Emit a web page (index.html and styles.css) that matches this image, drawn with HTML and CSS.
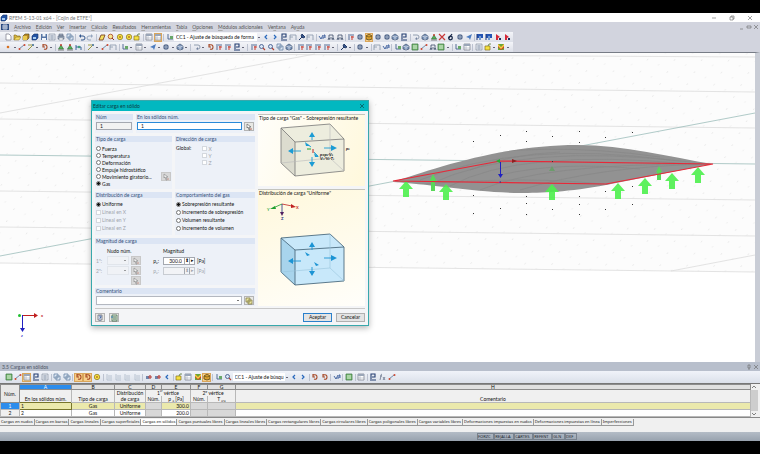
FILE: index.html
```html
<!DOCTYPE html>
<html lang="es">
<head>
  <meta charset="UTF-8">
  <title>RFEM 5-13-01 x64 - [Cojin de ETFE*]</title>
  <link rel="stylesheet" href="styles.css">
</head>
<body>

<!-- iconos -->
<svg class="defs" aria-hidden="true">
  <defs>
    <symbol id="i-doc" viewBox="0 0 8 8"><path d="M2 1h3l2 2v4H2z" fill="#fff" stroke="#667" stroke-width=".6"/></symbol>
    <symbol id="i-folder" viewBox="0 0 8 8"><path d="M1 7V2h2l1 1h3v1" fill="#d8b640" stroke="#806618" stroke-width=".6"/><path d="M1 7l2-3h5L6 7z" fill="#f4dc62" stroke="#806618" stroke-width=".5"/></symbol>
    <symbol id="i-cubey" viewBox="0 0 8 8"><path d="M1 3l2-2h4v4L5 7H1z" fill="#b98c28" stroke="#4d3c14" stroke-width=".6"/><path d="M1 3h4v4H1z" fill="#e8c850"/></symbol>
    <symbol id="i-cubeb" viewBox="0 0 8 8"><path d="M1 3l2-2h4v4L5 7H1z" fill="#2454a4" stroke="#183468" stroke-width=".6"/><path d="M2 4h3v2H2z" fill="#a8ccf0"/></symbol>
    <symbol id="i-disk" viewBox="0 0 8 8"><path d="M1 1h6v6H1z" fill="#5574a4"/><path d="M2.500 1h3v2.500h-3zM2 5h4v2H2z" fill="#f2f5fa"/></symbol>
    <symbol id="i-sheet" viewBox="0 0 8 8"><path d="M1 1h6v6H1z" fill="#e4e9f0" stroke="#7c8898" stroke-width=".6"/><path d="M2 3h4M2 5h4M4 2v5" stroke="#8794a8" stroke-width=".6"/></symbol>
    <symbol id="i-print" viewBox="0 0 8 8"><path d="M2 1h4v2H2zM1 3h6v3H1z" fill="#a4b0c0" stroke="#4d5a70" stroke-width=".5"/><path d="M2 5h4v2H2z" fill="#fff" stroke="#4d5a70" stroke-width=".4"/></symbol>
    <symbol id="i-copy" viewBox="0 0 8 8"><path d="M1 1h4v4H1zM3 3h4v4H3z" fill="#dfe9f5" stroke="#57759c" stroke-width=".7"/></symbol>
    <symbol id="i-notes" viewBox="0 0 8 8"><path d="M1 1h4v4H1zM3 3h4v4H3z" fill="#ece6a0" stroke="#77703c" stroke-width=".7"/></symbol>
    <symbol id="i-undo" viewBox="0 0 8 8"><path d="M2 3h3q2 0 2 2T5 7H3" fill="none" stroke="#32568c" stroke-width="1"/><path d="M3 1v4L1 3z" fill="#32568c"/></symbol>
    <symbol id="i-redo" viewBox="0 0 8 8"><path d="M6 3H3Q1 3 1 5t2 2h2" fill="none" stroke="#94a6bf" stroke-width="1"/><path d="M5 1v4l2-2z" fill="#94a6bf"/></symbol>
    <symbol id="i-pen" viewBox="0 0 8 8"><path d="M1 7l2-5h4L5 7z" fill="#f4e060" stroke="#7c4428" stroke-width=".9"/></symbol>
    <symbol id="i-ringr" viewBox="0 0 8 8"><circle cx="3.500" cy="3.500" r="2.300" fill="#f6e890" stroke="#b05030" stroke-width=".9"/><path d="M5 5l2 2" stroke="#903818" stroke-width="1"/></symbol>
    <symbol id="i-ringy" viewBox="0 0 8 8"><circle cx="4" cy="4" r="2.700" fill="#f4e040" stroke="#8a7420" stroke-width=".7"/><path d="M3 4h2" stroke="#a04020" stroke-width="1"/></symbol>
    <symbol id="i-boxy" viewBox="0 0 8 8"><path d="M1 3h5v4H1z" fill="#f4e040" stroke="#8a7420" stroke-width=".7"/><path d="M4 3l1-2h2" fill="none" stroke="#557733" stroke-width=".8"/></symbol>
    <symbol id="i-table" viewBox="0 0 8 8"><path d="M1 1h6v6H1z" fill="#fff" stroke="#727a88" stroke-width=".7"/><path d="M1 1h6v2H1z" fill="#9aa6b8"/><path d="M1 5h6M3 3v4" stroke="#9098a8" stroke-width=".5"/></symbol>
    <symbol id="i-axis" viewBox="0 0 8 8"><path d="M2 1v5h5" fill="none" stroke="#46608c" stroke-width=".9"/><path d="M4 3h3v3H4z" fill="#68a868"/></symbol>
    <symbol id="i-prev" viewBox="0 0 8 8"><path d="M5 2L3 4l2 2" fill="none" stroke="#2868bc" stroke-width="1.200"/></symbol>
    <symbol id="i-next" viewBox="0 0 8 8"><path d="M3 2l2 2-2 2" fill="none" stroke="#2868bc" stroke-width="1.200"/></symbol>
    <symbol id="i-load" viewBox="0 0 8 8"><path d="M1 7h6M2 6V1h4v3H3" fill="none" stroke="#223c70" stroke-width="1.100"/></symbol>
    <symbol id="i-frame" viewBox="0 0 8 8"><path d="M1 7V2h6v5M1 4h3" fill="none" stroke="#8794a8" stroke-width=".8"/></symbol>
    <symbol id="i-brush" viewBox="0 0 8 8"><path d="M1 7l3-3M4 1l3 3-2 1-2-2z" fill="#35548c" stroke="#253c68" stroke-width="1"/></symbol>
    <symbol id="i-beam" viewBox="0 0 8 8"><path d="M1 5h6M1 7l1-2 1 2M5 7l1-2 1 2M2 4V2h4v2" fill="none" stroke="#3c4c68" stroke-width=".8"/></symbol>
    <symbol id="i-xy" viewBox="0 0 8 8"><path d="M1 3l2 3 2-4M4 5h2V2h1v3" fill="none" stroke="#345898" stroke-width=".9"/></symbol>
    <symbol id="i-solid" viewBox="0 0 8 8"><path d="M1 3l3-2 3 2v3L4 7 1 6z" fill="#8098bc" stroke="#3c5070" stroke-width=".7"/><path d="M1 3l3 1 3-1M4 4v3" fill="none" stroke="#fff" stroke-width=".5"/></symbol>
    <symbol id="i-solido" viewBox="0 0 8 8"><path d="M1 3l3-2 3 2v3L4 7 1 6z" fill="#d8a030" stroke="#5c4818" stroke-width=".8"/><path d="M1 3l3 1 3-1" fill="none" stroke="#5c4818" stroke-width=".6"/></symbol>
    <symbol id="i-ball" viewBox="0 0 8 8"><circle cx="4" cy="4" r="2.700" fill="#516488"/><path d="M4 1.500v5M1.500 4h5" stroke="#cbd6e8" stroke-width=".6"/></symbol>
    <symbol id="i-line" viewBox="0 0 8 8"><path d="M1 6l5-4" stroke="#557799" stroke-width=".8"/><circle cx="1.500" cy="6" r="1" fill="#d04830"/><circle cx="6.500" cy="2" r="1" fill="#d04830"/></symbol>
    <symbol id="i-node" viewBox="0 0 8 8"><circle cx="4" cy="4" r="1.300" fill="#d87020"/></symbol>
    <symbol id="i-member" viewBox="0 0 8 8"><path d="M1 7l5-5M1 2h6" stroke="#9c9840" stroke-width="1"/><circle cx="6" cy="2" r="1" fill="#4878b0"/></symbol>
    <symbol id="i-support" viewBox="0 0 8 8"><path d="M4 2l2.500 4h-5z" fill="#58b058" stroke="#2c6c34" stroke-width=".6"/><path d="M1 7h6" stroke="#555" stroke-width=".7"/><circle cx="4" cy="2" r="1" fill="#c04030"/></symbol>
    <symbol id="i-hinge" viewBox="0 0 8 8"><path d="M1 2v5M1 4h5M6 4v3" stroke="#2c5c94" stroke-width=".9"/><circle cx="4" cy="4" r="1.300" fill="#44a080"/></symbol>
    <symbol id="i-red" viewBox="0 0 8 8"><path d="M1 2h6M2 3v4" stroke="#46608c" stroke-width=".9"/><path d="M4 4h3M5 3v4" stroke="#c83c30" stroke-width="1"/></symbol>
    <symbol id="i-cross" viewBox="0 0 8 8"><path d="M1 1l6 6M7 1L1 7" stroke="#c83838" stroke-width="1.200"/></symbol>
    <symbol id="i-six" viewBox="0 0 8 8"><circle cx="3.500" cy="5" r="1.800" fill="none" stroke="#182848" stroke-width="1.300"/><path d="M2 5l3-4" stroke="#182848" stroke-width="1.200"/></symbol>
    <symbol id="i-plane" viewBox="0 0 8 8"><path d="M1 4l6-3-2 6-1-2z" fill="#4c7cc0"/></symbol>
    <symbol id="i-flagb" viewBox="0 0 8 8"><path d="M1 1h6v4H1z" fill="#2454b4"/><path d="M1 1v6" stroke="#1c3878"/><path d="M3 3h2v4H3z" fill="#7098d0"/></symbol>
    <symbol id="i-flagr" viewBox="0 0 8 8"><path d="M2 1l4 3-2 1v2H2z" fill="#d42838"/><path d="M5 5h2v2H5z" fill="#1c2c58"/></symbol>
    <symbol id="i-zoom" viewBox="0 0 8 8"><circle cx="3.500" cy="3.500" r="2" fill="#dbe7f7" stroke="#445c8c" stroke-width=".9"/><path d="M5 5l2 2" stroke="#b04030" stroke-width="1.100"/></symbol>
    <symbol id="i-green" viewBox="0 0 8 8"><path d="M1 1h6v6H1z" fill="#7fbf78" stroke="#38703c" stroke-width=".7"/><path d="M2 3h4M2 5h4" stroke="#fff" stroke-width=".7"/></symbol>
    <symbol id="i-chart" viewBox="0 0 8 8"><path d="M1 1h6v6H1z" fill="#68a838"/><path d="M1 1l3 3 3-3v4L4 7 1 4z" fill="#d03c28"/><path d="M1 1l3 3 3-3v2L4 6 1 3z" fill="#f0d840"/></symbol>
    <symbol id="i-arrow" viewBox="0 0 8 8"><path d="M1 2h4q2 0 2 2T5 6" fill="none" stroke="#8794a8" stroke-width=".9"/><path d="M3 6l2-2v3z" fill="#7484a0"/></symbol>
    <symbol id="i-rot" viewBox="0 0 8 8"><path d="M2 2q4-1 4 2T3 6M2 1v3h2" fill="none" stroke="#a44420" stroke-width="1.100"/></symbol>
    <symbol id="i-del" viewBox="0 0 8 8"><path d="M1 3h3v3H1z" fill="#6c84ac"/><path d="M3 4h4M5 2v4" stroke="#b83c38" stroke-width="1.200"/></symbol>
    <symbol id="i-faint" viewBox="0 0 8 8"><path d="M2 1v6h5M4 2v4M6 2v4" fill="none" stroke="#b4bfce" stroke-width=".9"/></symbol>
    <symbol id="i-fx" viewBox="0 0 8 8"><path d="M4 1Q3 1 3 3L2 7M2 3h2M5 4l2 3M7 4L5 7" fill="none" stroke="#68748c" stroke-width=".8"/></symbol>
    <symbol id="i-pick" viewBox="0 0 8 8"><path d="M2 1l4 3H4l1 3-1 0-1-3-1 1z" fill="#fff" stroke="#555" stroke-width=".6"/><path d="M5 6h2" stroke="#b05040" stroke-width=".8"/></symbol>
    <symbol id="i-help" viewBox="0 0 8 8"><path d="M2 1h4v5H2z" fill="#e9f0fa" stroke="#445" stroke-width=".6"/><path d="M3 2h2v1.500H4V5M4 6v1" fill="none" stroke="#234a90" stroke-width=".7"/></symbol>
    <symbol id="i-calc" viewBox="0 0 8 8"><path d="M2 1h5v6H2z" fill="#dceadc" stroke="#355c3c" stroke-width=".7"/><path d="M3 3h3M3 5h3" stroke="#355c3c" stroke-width=".8"/><path d="M1 3h2" stroke="#2878b0"/></symbol>
    <symbol id="i-logo" viewBox="0 0 8 8"><path d="M0 1h8v6H0z" fill="#2b4a80"/><path d="M1 3h6M1 5h6M3 1v6M5 1v6" stroke="#e8eef8" stroke-width=".8"/></symbol>
  </defs>
</svg>

<div class="app">
  <header class="titlebar">
    <svg class="icon"><use href="#i-cubeb"/></svg>
    <span class="title-text">RFEM 5-13-01 x64 - [Cojin de ETFE*]</span>
    <div class="win-buttons">
      <button type="button" aria-label="Minimizar"><svg viewBox="0 0 6 6"><path d="M1 3h4"/></svg></button>
      <button type="button" aria-label="Restaurar"><svg viewBox="0 0 6 6"><path d="M1 2h3v3H1zM2 2V1h3v3H4"/></svg></button>
      <button type="button" aria-label="Cerrar"><svg viewBox="0 0 6 6"><path d="M1 1l4 4M5 1L1 5"/></svg></button>
    </div>
  </header>

  <nav class="menubar">
    <svg class="icon"><use href="#i-logo"/></svg>
    <a href="#"><u>A</u>rchivo</a>
    <a href="#"><u>E</u>dición</a>
    <a href="#"><u>V</u>er</a>
    <a href="#"><u>I</u>nsertar</a>
    <a href="#"><u>C</u>álculo</a>
    <a href="#"><u>R</u>esultados</a>
    <a href="#"><u>H</u>erramientas</a>
    <a href="#"><u>T</u>abla</a>
    <a href="#"><u>O</u>pciones</a>
    <a href="#"><u>M</u>ódulos adicionales</a>
    <a href="#">Ve<u>n</u>tana</a>
    <a href="#">Ay<u>u</u>da</a>
    <div class="win-buttons mdi">
      <button type="button" aria-label="Minimizar ventana"><svg viewBox="0 0 6 6"><path d="M1 5h3"/></svg></button>
      <button type="button" aria-label="Restaurar ventana"><svg viewBox="0 0 6 6"><path d="M1 2h4v2H1z"/></svg></button>
      <button type="button" aria-label="Cerrar ventana"><svg viewBox="0 0 6 6"><path d="M1 1l4 4M5 1L1 5"/></svg></button>
    </div>
  </nav>

  <div class="toolbars">
    <div class="toolbar" id="bar-main"></div>
    <div class="toolbar" id="bar-model"></div>
  </div>

  <main class="workspace">
    <svg class="scene" viewBox="0 53 755 310" preserveAspectRatio="xMinYMin slice" role="img" aria-label="Modelo del cojín">
      <defs>
        <pattern id="dots" width="27" height="12" patternUnits="userSpaceOnUse" patternTransform="matrix(1 .012 -.6 1 0 0)">
          <rect x="3" y="3" width="1" height="1" fill="#dedede"/>
          <rect x="17" y="8" width="1" height="1" fill="#e6e6e6"/>
        </pattern>
        <g id="up"><path d="M0 0l7 8H3v8h-6V8h-4z" fill="#4cf04c" fill-opacity=".9"/></g>
        <clipPath id="shell-clip"><path d="M393 182C430 170 500 145 577 145C625 145 670 157 712 164L606 185C570 192 540 193 520 193C470 192 440 185 393 182z"/></clipPath>
      </defs>
      <path d="M0 53h755v219L0 263z" fill="#fcfcfc"/>
      <path d="M0 53h755v219L0 263z" fill="url(#dots)"/>
      <g stroke="#dcdcdc" stroke-width=".8">
        <path d="M0 53l755 4M0 83l755 9M0 119l755 9M0 191l755 9M0 227l755 9M0 263l755 9M0 113L315 54M671 271l84-16"/>
      </g>
      <path d="M0 155l755 9M0 256L755 113" stroke="#8fb5b1" stroke-width=".7"/>
      <path d="M393 182C430 170 500 145 577 145C625 145 670 157 712 164L606 185C570 192 540 193 520 193C470 192 440 185 393 182z" fill="#929292"/>
      <g clip-path="url(#shell-clip)" fill="none" stroke="#868686" stroke-width=".7">
        <path d="M420 180q100-40 250-20M430 184q90-42 260-22M450 186q70-38 240-22M480 190q60-26 220-26M520 190q80-24 190-26M440 160q100-20 220-3M410 185q120-10 200 0M500 175q60-14 140-6M470 170q40-16 90-18"/>
      </g>
      <g class="supports">
        <use href="#up" x="406" y="181"/>
        <use href="#up" x="446" y="184"/>
        <use href="#up" x="552" y="184"/>
        <use href="#up" x="618" y="183"/>
        <use href="#up" x="645" y="178"/>
        <use href="#up" x="672" y="173"/>
        <use href="#up" x="698" y="167"/>
        <path d="M433 174l4 8h-2v9h-4v-9h-2zM659 166l3 6h-1v8h-4v-8h-1z" fill="#58d858"/>
        <path d="M552 166l3 5h-6z" fill="#6c9c6c"/>
      </g>
      <path d="M393 181L500 161L713 164L606 184z" fill="none" stroke="#e82838" stroke-width="1.200"/>
      <path d="M500.500 162v14" stroke="#2020c0"/>
      <path d="M498 174h5l-2.500 4z" fill="#2020c0"/>
      <path d="M496 161l4-2v4z" fill="#20b030"/>
      <path d="M512 159l5 2-5 2z" fill="#902020"/>
      <text x="499" y="183" fill="#2020c0">z</text>
      <g fill="#333">
        <path d="M473 141h1v1h-1zM500 135h1v1h-1zM526 131h1v1h-1zM526 141h1v1h-1zM552 136h1v1h-1zM579 131h1v1h-1zM579 142h1v1h-1zM605 137h1v1h-1zM632 132h1v1h-1zM552 161h1v1h-1z"/>
        <path d="M473 195h1v1h-1zM526 196h1v1h-1zM579 196h1v1h-1zM605 191h1v1h-1zM632 186h1v1h-1zM500 208h1v1h-1zM526 203h1v1h-1zM552 209h1v1h-1zM579 204h1v1h-1zM605 209h1v1h-1zM632 204h1v1h-1zM473 213h1v1h-1zM526 214h1v1h-1zM579 214h1v1h-1z"/>
      </g>
      <!-- ejes globales -->
      <path d="M22 315.500h13" stroke="#c02020"/>
      <path d="M34 313l4 2.500-4 2.500z" fill="#c02020"/>
      <path d="M22.500 315v14" stroke="#2020c0"/>
      <path d="M20 328h5l-2.500 4z" fill="#2020c0"/>
      <circle cx="19.500" cy="315.500" r="1.500" fill="#20c030"/>
      <text x="41" y="317" fill="#c02020">x</text>
      <text x="21" y="337" fill="#2020c0">z</text>
    </svg>

    <form class="dialog">
      <div class="dialog-title">
        <span>Editar carga en sólido</span>
        <button type="button" aria-label="Cerrar"><svg viewBox="0 0 6 6"><path d="M1 1l4 4M5 1L1 5"/></svg></button>
      </div>

      <div class="dialog-body">
        <div class="groups">
          <div class="group-row row-ids">
            <section class="group">
              <h3><label for="num">Núm</label></h3>
              <input id="num" type="text" value="1" readonly>
            </section>
            <section class="group">
              <h3><label for="solids">En los sólidos núm.</label></h3>
              <div class="line">
                <input id="solids" class="focused" type="text" value="1">
                <button type="button" class="tool" aria-label="Seleccionar"><svg class="icon"><use href="#i-pick"/></svg></button>
              </div>
            </section>
          </div>

          <div class="group-row row-type">
            <section class="group">
              <h3>Tipo de carga</h3>
              <div class="options">
                <label><input type="radio" name="type">Fuerza</label>
                <label><input type="radio" name="type">Temperatura</label>
                <label><input type="radio" name="type">Deformación</label>
                <label><input type="radio" name="type">Empuje hidrostático</label>
                <div class="with-tool">
                  <label><input type="radio" name="type">Movimiento giratorio...</label>
                  <button type="button" class="tool off" aria-label="Parámetros" disabled><svg class="icon"><use href="#i-pick"/></svg></button>
                </div>
                <label><input type="radio" name="type" checked>Gas</label>
              </div>
            </section>
            <section class="group">
              <h3>Dirección de carga</h3>
              <div class="direction">
                <span>Global:</span>
                <div class="options">
                  <label class="dim"><input type="checkbox" disabled>X</label>
                  <label class="dim"><input type="checkbox" disabled>Y</label>
                  <label class="dim"><input type="checkbox" disabled>Z</label>
                </div>
              </div>
            </section>
          </div>

          <div class="group-row row-dist">
            <section class="group">
              <h3>Distribución de carga</h3>
              <div class="options loose">
                <label><input type="radio" name="dist" checked>Uniforme</label>
                <label class="dim"><input type="checkbox" disabled>Lineal en X</label>
                <label class="dim"><input type="checkbox" disabled>Lineal en Y</label>
                <label class="dim"><input type="checkbox" disabled>Lineal en Z</label>
              </div>
            </section>
            <section class="group">
              <h3>Comportamiento del gas</h3>
              <div class="options loose">
                <label><input type="radio" name="gas" checked>Sobrepresión resultante</label>
                <label><input type="radio" name="gas">Incremento de sobrepresión</label>
                <label><input type="radio" name="gas">Volumen resultante</label>
                <label><input type="radio" name="gas">Incremento de volumen</label>
              </div>
            </section>
          </div>

          <section class="group row-mag">
            <h3>Magnitud de carga</h3>
            <div class="magnitude">
              <span></span><span>Nudo núm.</span><span></span><span></span><span>Magnitud</span><span></span>

              <label class="dim" for="n1">1ª:</label>
              <select id="n1" disabled></select>
              <button type="button" class="tool off" aria-label="Elegir nudo 1" disabled><svg class="icon"><use href="#i-pick"/></svg></button>
              <label class="sym" for="p1">p₀:</label>
              <div class="spin"><input id="p1" type="text" value="300.0"><button type="button" aria-label="Cambiar">⬍</button><button type="button" aria-label="Más">▸</button></div>
              <span>[Pa]</span>

              <label class="dim" for="n2">2ª:</label>
              <select id="n2" disabled></select>
              <button type="button" class="tool off" aria-label="Elegir nudo 2" disabled><svg class="icon"><use href="#i-pick"/></svg></button>
              <label class="sym dim" for="p2">p₂:</label>
              <div class="spin off"><input id="p2" type="text" disabled><button type="button" aria-label="Cambiar" disabled>⬍</button><button type="button" aria-label="Más" disabled>▸</button></div>
              <span class="dim">[Pa]</span>

              <span></span><span></span>
              <button type="button" class="tool off" aria-label="Elegir ambos" disabled><svg class="icon"><use href="#i-pick"/></svg></button>
            </div>
          </section>

          <section class="group row-comment">
            <h3><label for="comment">Comentario</label></h3>
            <div class="line">
              <select id="comment"></select>
              <button type="button" class="tool" aria-label="Comentarios"><svg class="icon"><use href="#i-notes"/></svg></button>
            </div>
          </section>
        </div>

        <div class="previews">
          <figure class="preview">
            <figcaption>Tipo de carga "Gas" - Sobrepresión resultante</figcaption>
            <svg viewBox="258 122 107 64">
              <path d="M281 129l49-4 14 15v32l-49 5-14-13z" fill="#ededde"/>
              <path d="M281 129l14 13v35l-14-13z" fill="#dcdccf"/>
              <path d="M281 129l49-4 14 15-49 3z M281 129v35l14 13v-34M295 177l49-5v-32" fill="none" stroke="#777" stroke-width=".8"/>
              <path d="M330 125v34l14 13M330 159l-49 5" fill="none" stroke="#bbb" stroke-width=".6"/>
              <g stroke="#1c9cd4" fill="#1c9cd4" stroke-width=".9">
                <path d="M312 141v-4M312 158v6M301 152h-9M324 149h9"/>
                <path d="M309 138h6l-3-5zM309 163h6l-3 5zM293 149v6l-5-3zM331 146v6l6-3zM305 143l5 4-4 0zM314 154l5 4-4 0z" stroke="none"/>
                <path d="M307 145l4 3M314 153l4 4"/>
              </g>
              <path d="M307 150h4" stroke="#20a030"/><path d="M313 150v4" stroke="#c02020"/>
              <text x="320" y="157" font-style="italic">p=p₀·V₀</text>
              <text x="320" y="161" font-style="italic">V₁/V₀·T₁</text>
              <text x="346" y="151" font-style="italic">p₀</text>
            </svg>
          </figure>
          <figure class="preview tall">
            <figcaption>Distribución de carga "Uniforme"</figcaption>
            <svg viewBox="258 197 107 110">
              <path d="M282 205l-9 4" stroke="#20a030" stroke-width=".8"/><path d="M270 210l5-3 1 3z" fill="#20a030"/>
              <path d="M282 205l10 2" stroke="#c02020" stroke-width=".8"/><path d="M291 205l5 3-5 1z" fill="#c02020"/>
              <path d="M282 205v9" stroke="#203080" stroke-width=".8"/><path d="M280 213h4l-2 4z" fill="#502060"/>
              <text x="267" y="212" fill="#20a030">Y</text><text x="296" y="210" fill="#c02020">X</text><text x="281" y="221" fill="#203080">Z</text>
              <path d="M281 239l49-4 14 13v34l-49 4-14-13z" fill="#c8e8fa"/>
              <path d="M281 239l14 12v35l-14-13z" fill="#a8d4ec"/>
              <path d="M281 239l49-4 14 13-49 3z M281 239v34l14 13v-35M295 286l49-4v-34" fill="none" stroke="#4c6c80" stroke-width=".9"/>
              <path d="M330 235v34l14 13M330 269l-49 4" fill="none" stroke="#98c4dc" stroke-width=".6"/>
              <g stroke="#1c94d4" fill="#1c94d4" stroke-width=".9">
                <path d="M312 251v-5M312 268v6M301 262h-9M324 259h9"/>
                <path d="M309 248h6l-3-5zM309 272h6l-3 5zM293 259v6l-5-3zM331 256v6l6-3zM305 253l5 3-3 1zM314 263l5 3-3 1z" stroke="none"/>
              </g>
            </svg>
          </figure>
        </div>
      </div>

      <div class="dialog-footer">
        <button type="button" class="tool" aria-label="Ayuda"><svg class="icon"><use href="#i-help"/></svg></button>
        <button type="button" class="tool" aria-label="Unidades"><svg class="icon"><use href="#i-calc"/></svg></button>
        <button type="submit" class="btn primary">Aceptar</button>
        <button type="button" class="btn">Cancelar</button>
      </div>
    </form>
  </main>

  <section class="panel">
    <div class="panel-title">
      <span>3.5 Cargas en sólidos</span>
      <div class="win-buttons">
        <button type="button" aria-label="Fijar"><svg viewBox="0 0 6 6"><path d="M2 1h2v3H2zM3 4v2"/></svg></button>
        <button type="button" aria-label="Cerrar panel"><svg viewBox="0 0 6 6"><path d="M1 1l4 4M5 1L1 5"/></svg></button>
      </div>
    </div>
    <div class="toolbar-strip">
      <div class="toolbar short" id="bar-table"></div>
    </div>

    <div class="grid-wrap">
      <table class="loads">
        <colgroup>
          <col class="c-n"><col class="c-a"><col class="c-b"><col class="c-c"><col class="c-d"><col class="c-e"><col class="c-f"><col class="c-g"><col>
        </colgroup>
        <thead>
          <tr class="letters">
            <th rowspan="3" class="num">Núm.</th>
            <th class="current">A</th><th>B</th><th>C</th><th>D</th><th>E</th><th>F</th><th>G</th><th>H</th>
          </tr>
          <tr class="names">
            <th></th><th></th><th>Distribución</th><th colspan="2">1<sup>er</sup> vértice</th><th colspan="2">2º vértice</th><th></th>
          </tr>
          <tr class="names">
            <th>En los sólidos núm.</th><th>Tipo de carga</th><th>de carga</th><th>Núm.</th><th>p ₀ [Pa]</th><th>Núm.</th><th>T ₀,₂</th><th>Comentario</th>
          </tr>
        </thead>
        <tbody>
          <tr class="selected">
            <th>1</th><td class="left cell">1</td><td>Gas</td><td>Uniforme</td><td class="na"></td><td class="right">300.0</td><td class="na"></td><td class="na"></td><td></td>
          </tr>
          <tr>
            <th>2</th><td class="left">2</td><td>Gas</td><td>Uniforme</td><td class="na"></td><td class="right">200.0</td><td class="na"></td><td class="na"></td><td></td>
          </tr>
        </tbody>
      </table>
      <div class="scroll">
        <button type="button" aria-label="Subir"><svg viewBox="0 0 6 6"><path d="M1 4l2-2 2 2"/></svg></button>
        <button type="button" aria-label="Bajar"><svg viewBox="0 0 6 6"><path d="M1 2l2 2 2-2"/></svg></button>
      </div>
    </div>

    <nav class="tabs">
      <a href="#">Cargas en nudos</a>
      <a href="#">Cargas en barras</a>
      <a href="#">Cargas lineales</a>
      <a href="#">Cargas superficiales</a>
      <a href="#" class="active">Cargas en sólidos</a>
      <a href="#">Cargas puntuales libres</a>
      <a href="#">Cargas lineales libres</a>
      <a href="#">Cargas rectangulares libres</a>
      <a href="#">Cargas circulares libres</a>
      <a href="#">Cargas poligonales libres</a>
      <a href="#">Cargas variables libres</a>
      <a href="#">Deformaciones impuestas en nudos</a>
      <a href="#">Deformaciones impuestas en línea</a>
      <a href="#">Imperfecciones</a>
    </nav>
  </section>

  <footer class="statusbar">
    <span>FORZC</span><span>REJALLA</span><span>CARTES</span><span>REFENT</span><span>GLN</span><span>DXF</span>
  </footer>
</div>

<script src="toolbars.js"></script>
</body>
</html>
```
FILE: styles.css
```css
* {
  box-sizing: border-box;
}

body {
  margin: 0;
  background-color: #000;
  font-family: Lato, "Noto Sans", sans-serif;
  font-size: 5px;
  line-height: 6px;
  color: #111;
}

button, input, select {
  font: inherit;
  color: inherit;
  margin: 0;
  padding: 0;
  border: none;
  border-radius: 0;
  background: none;
  min-width: 0;
}

a {
  color: inherit;
  text-decoration: none;
}

.defs {
  position: absolute;
  width: 0;
  height: 0;
}

.icon {
  display: block;
  width: 8px;
  height: 8px;
  flex: none;
}

.app {
  display: flex;
  flex-direction: column;
  height: 100vh;
  padding: 13px 0;
}

/* barra de título y menú */
.titlebar {
  display: flex;
  align-items: center;
  height: 9px;
  background-color: #fff;
  color: #777;
}

.title-text {
  margin-left: 1px;
}

.win-buttons {
  display: flex;
  gap: 12px;
  margin-left: auto;
  padding-right: 7px;
}

.win-buttons button,
.dialog-title button,
.scroll button {
  width: 6px;
  height: 6px;
}

.win-buttons svg,
.dialog-title svg,
.scroll svg {
  display: block;
  width: 6px;
  height: 6px;
  fill: none;
  stroke: #666;
  stroke-width: 0.6;
}

.menubar {
  display: flex;
  align-items: center;
  gap: 5px;
  height: 10px;
  padding-left: 1px;
  background-color: #d2d4de;
  color: #555;
}

.menubar u {
  text-decoration-thickness: 1px;
  text-decoration-color: #aaa;
}

.win-buttons.mdi,
.panel-title .win-buttons {
  gap: 1px;
  padding-right: 1px;
}

/* barras de herramientas */
.toolbars {
  background-color: #d2d4de;
}

.toolbar {
  display: flex;
  align-items: center;
  width: 513px;
  height: 10px;
  padding: 0 2px 0 4px;
  background: linear-gradient(#f4f5f9, #dcdfe8);
}

.toolbar.short {
  width: 398px;
  background: none;
}

.toolbar button {
  display: flex;
  align-items: center;
  justify-content: center;
  flex: 1 1 0;
  height: 9px;
}

.toolbar button.active {
  background-color: #f6cf8c;
  outline: 1px solid #d9a55a;
  outline-offset: -1px;
}

.toolbar .sep {
  width: 1px;
  height: 7px;
  margin: 0 1px;
  background-color: #bcc2d0;
}

.toolbar .caret {
  width: 4px;
  height: 2px;
  margin-right: 1px;
  background: linear-gradient(#667, #667) center / 2px 1px no-repeat;
}

.toolbar select {
  appearance: none;
  flex: none;
  width: 83px;
  height: 8px;
  padding-left: 2px;
  background-color: #fff;
  line-height: 8px;
}

.toolbar.short select {
  width: 52px;
}

/* área de trabajo */
.workspace {
  position: relative;
  flex: 1;
  min-height: 0;
  border-top: 1px solid #777c86;
  border-right: 5px solid #c9cdd6;
  background-color: #fff;
}

.scene {
  position: absolute;
  width: 100%;
  height: 100%;
}

.scene text,
.preview text {
  font-size: 4px;
  font-weight: bold;
}

/* diálogo */
.dialog {
  position: absolute;
  left: 91px;
  top: 47px;
  width: 278px;
  border: 1px solid #38a8ac;
  background-color: #f4f5f7;
  box-shadow: 0 2px 6px rgba(0, 0, 0, 0.3);
}

.dialog-title {
  display: flex;
  align-items: center;
  justify-content: space-between;
  height: 10px;
  padding: 0 3px 0 1px;
  background-color: #02b8c0;
  color: #0c3c40;
}

.dialog-title svg {
  stroke: #0c3c40;
}

.dialog-body {
  display: grid;
  grid-template-columns: 160px 1fr;
  gap: 3px;
  padding: 3px 3px 2px;
}

.groups {
  display: flex;
  flex-direction: column;
  gap: 3px;
}

.group-row {
  display: grid;
  grid-template-columns: 77px 1fr;
  gap: 3px;
}

.row-ids {
  grid-template-columns: 38px 1fr;
  height: 19px;
}

.row-type {
  height: 53px;
}

.row-dist {
  height: 43px;
}

.row-mag {
  height: 47px;
}

.row-comment {
  height: 18px;
}

.group {
  background-color: #edf1f8;
}

.group h3 {
  margin: 0 0 2px;
  padding-left: 1px;
  height: 6px;
  background-color: #dce5f4;
  font-size: 5px;
  font-weight: normal;
  color: #345078;
}

.group input[type="text"] {
  width: 100%;
  height: 8px;
  padding: 0 3px;
  border: 1px solid #a4a8b0;
  background-color: #fff;
}

.group #num {
  width: 36px;
  margin-left: 1px;
  background-color: #f2f2f2;
}

.group input.focused {
  border-color: #2a8ad8;
}

.line {
  display: flex;
  gap: 2px;
  padding: 0 1px;
}

.group select {
  appearance: none;
  width: 100%;
  height: 9px;
  border: 1px solid #b4b8c0;
  background: linear-gradient(#777, #777) right 2px center / 2px 1px no-repeat #fff;
}

.group select:disabled {
  border-color: #dde0e6;
  background-color: #f2f3f6;
}

.tool {
  display: flex;
  align-items: center;
  justify-content: center;
  flex: none;
  width: 10px;
  height: 9px;
  border: 1px solid #b4b4b4;
  background-color: #e8e8e4;
}

.tool.off {
  border-color: #c8c8c8;
  background-color: #d8d8d8;
}

.tool.off .icon {
  opacity: 0.6;
}

.options {
  padding: 1px 0 0 1px;
}

.options label {
  display: flex;
  align-items: center;
  gap: 1px;
  height: 7px;
  white-space: nowrap;
}

.options.loose {
  padding-top: 0;
}

.options.loose label {
  height: 8px;
}

.options input {
  appearance: none;
  width: 5px;
  height: 5px;
  border: 1px solid #777;
  background-color: #fff;
}

.options input[type="radio"] {
  border-radius: 50%;
}

.options input:checked {
  background: radial-gradient(#111 1px, #fff 2px);
}

.options input:disabled {
  border-color: #d4d8de;
}

.dim {
  color: #a0a4ac;
}

.with-tool {
  display: flex;
  align-items: center;
  justify-content: space-between;
  height: 7px;
  padding-right: 1px;
}

.direction {
  display: flex;
  gap: 10px;
  padding-left: 1px;
}

.direction > span {
  padding-top: 1px;
}

.magnitude {
  display: grid;
  grid-template-columns: 9px 22px 12px 16px 32px 1fr;
  grid-auto-rows: 9px;
  align-items: center;
  gap: 1px 2px;
  padding-left: 1px;
  white-space: nowrap;
}

.magnitude .sym {
  padding-right: 2px;
  text-align: right;
}

.spin {
  display: flex;
  align-items: center;
  height: 8px;
  border: 1px solid #a4a8b0;
  background-color: #fff;
}

.group .spin input {
  flex: 1;
  height: 6px;
  padding: 0 2px;
  border: none;
  background: none;
  text-align: right;
}

.spin button {
  width: 5px;
  height: 6px;
  border-left: 1px solid #a4a8b0;
  line-height: 5px;
}

.spin.off {
  border-color: #c8ccd2;
  background-color: #f2f3f6;
  color: #a0a4ac;
}

.previews {
  display: flex;
  flex-direction: column;
  gap: 3px;
}

.preview {
  margin: 0;
  height: 72px;
  border-top: 1px solid #c4c4bc;
  background: linear-gradient(110deg, #fffefa, #fff8dc);
}

.preview.tall {
  flex: 1;
  background: linear-gradient(160deg, #fff8dc, #fffefa);
}

.preview figcaption {
  padding-left: 1px;
  white-space: nowrap;
}

.preview svg {
  display: block;
  width: 100%;
}

.dialog-footer {
  display: flex;
  align-items: center;
  gap: 4px;
  margin: 0 3px;
  padding: 4px 0 3px;
  border-top: 1px solid #c8c8c8;
}

.btn {
  width: 29px;
  height: 9px;
  border: 1px solid #b0b0b0;
  background-color: #e4e4e4;
  line-height: 7px;
}

.btn.primary {
  margin-left: auto;
  border-color: #2a80cc;
}

/* panel de tablas */
.panel {
  background-color: #f0f0f0;
}

.panel-title {
  display: flex;
  align-items: center;
  justify-content: space-between;
  height: 9px;
  padding-left: 2px;
  background-color: #b8bfcc;
  color: #4c5464;
}

.toolbar-strip {
  padding: 1px 0;
  background: linear-gradient(#f0f3f9, #dbe0ea);
}

.grid-wrap {
  display: flex;
  padding-right: 2px;
  border-top: 1px solid #777;
}

.loads {
  flex: 1;
  table-layout: fixed;
  border-collapse: collapse;
  width: 100%;
  background-color: #fff;
  text-align: center;
}

.c-n { width: 19px; }
.c-a { width: 52px; }
.c-b { width: 43px; }
.c-c { width: 31px; }
.c-d { width: 16px; }
.c-e { width: 29px; }
.c-f { width: 17px; }
.c-g { width: 28px; }

.loads th,
.loads td {
  height: 7px;
  padding: 0 1px;
  border: 1px solid #b8b8b8;
  font-weight: normal;
  line-height: 6px;
  white-space: nowrap;
}

.loads th {
  background-color: #f0f0f0;
}

.loads .letters th {
  height: 5px;
  border-color: #8c8c8c;
  background-color: #e0e0e0;
  line-height: 4px;
}

.loads .letters th.num {
  background-color: #e8e8e8;
}

.loads .letters th.current,
.loads .selected th {
  background-color: #2c8cec;
  color: #fff;
}

.loads .names th {
  height: 6px;
  border-top: none;
  border-bottom: none;
}

.loads sup {
  font-size: 3px;
  line-height: 0;
}

.loads .selected td {
  background-color: #ebe9ac;
}

.loads td.na,
.loads .selected td.na {
  background-color: #d8d8d8;
}

.loads .left {
  text-align: left;
}

.loads .right {
  text-align: right;
}

.loads .cell {
  border-color: #77752c;
}

.scroll {
  display: flex;
  flex-direction: column;
  justify-content: space-between;
  width: 7px;
  background-color: #cdcdcd;
}

.scroll button {
  width: 7px;
  background-color: #f0f0f0;
}

.scroll svg {
  stroke: #333;
}

.tabs,
.statusbar {
  font-family: "Noto Sans", sans-serif;
  font-size: 4px;
}

.tabs {
  display: flex;
  padding: 1px 0 6px;
  border-top: 1px solid #888;
}

.tabs a {
  height: 7px;
  padding: 0 1px;
  border: 1px solid #999;
  border-top: none;
  border-left: none;
  line-height: 6px;
  white-space: nowrap;
}

.tabs a.active {
  background-color: #fff;
}

.statusbar {
  display: flex;
  align-items: center;
  height: 9px;
  padding-left: 477px;
  padding-right: 183px;
  background: linear-gradient(#b4bcc6, #98a2ae);
  color: #222a34;
}

.statusbar span {
  flex: 1 1 auto;
  border: 1px solid #78828e;
  height: 7px;
  line-height: 5px;
}
```
FILE: toolbars.js
```js
// Cada barra es una lista de iconos: "|" separador, "!" activo, "+" con menú
const bars = {
  'bar-main': [
    'doc folder cubey cubeb disk sheet print copy | undo redo | pen ringr ringy ringy boxy | table table! | axis',
    ['CC1 - Ajuste de búsqueda de forma'],
    'prev next load frame brush frame | xy beam beam | red ball solido! ball ball solid load | arrow solid support cross six ball plane | flagb flagb flagr flagr'
  ],
  'bar-model': [
    'node+ line member+ rot+ | support support hinge | member+ line frame | axis+ table+ plane+ ball+ solid+ | arrow+ rot red red load+ | red zoom zoom copy solid | red red red red+ | brush+ | ball+ | frame xy | axis solid green line beam green+ | axis table | sheet boxy+ chart+'
  ],
  'bar-table': [
    'green line table! load sheet | copy copy | rot! rot! ringy | faint faint faint faint | del del prev | boxy table chart solido! | axis zoom',
    ['CC1 - Ajuste de búsqu'],
    'prev next | rot rot | xy | green | table | load fx line'
  ]
};

function addIcons(bar, list) {
  list.split(' ').forEach(function (item) {
    if (item === '|') {
      const sep = document.createElement('span');
      sep.className = 'sep';
      bar.appendChild(sep);
      return;
    }
    const name = item.replace(/[!+]/, '');
    const button = document.createElement('button');
    button.type = 'button';
    button.setAttribute('aria-label', name);
    if (item.endsWith('!')) button.className = 'active';
    button.innerHTML = '<svg class="icon"><use href="#i-' + name + '"/></svg>';
    bar.appendChild(button);
    if (item.endsWith('+')) {
      const caret = document.createElement('span');
      caret.className = 'caret';
      bar.appendChild(caret);
    }
  });
}

Object.keys(bars).forEach(function (id) {
  const bar = document.getElementById(id);
  bars[id].forEach(function (part) {
    if (typeof part === 'string') {
      addIcons(bar, part);
      return;
    }
    const select = document.createElement('select');
    select.setAttribute('aria-label', 'Caso de carga');
    select.add(new Option(part[0]));
    bar.appendChild(select);
    const caret = document.createElement('span');
    caret.className = 'caret';
    bar.appendChild(caret);
  });
});
```
